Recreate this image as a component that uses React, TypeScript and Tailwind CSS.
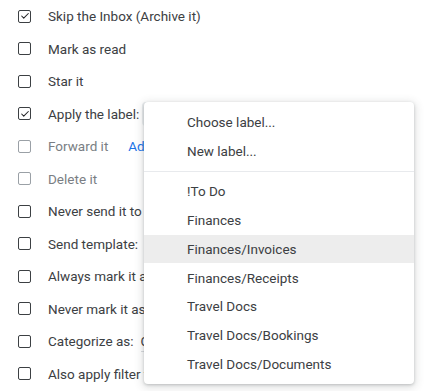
import { Check } from "lucide-react";

type Row = {
  label: string;
  checked?: boolean;
  disabled?: boolean;
  extra?: React.ReactNode;
};

const rows: Row[] = [
  { label: "Skip the Inbox (Archive it)", checked: true },
  { label: "Mark as read" },
  { label: "Star it" },
  {
    label: "Apply the label:",
    checked: true,
    extra: <div className="ml-[3px] h-[24px] w-[120px] shrink-0 rounded-[4px] bg-[#eceff1]" />,
  },
  {
    label: "Forward it",
    disabled: true,
    extra: <span className="ml-[20px] text-[#1a73e8]">Add forwarding address</span>,
  },
  { label: "Delete it", disabled: true },
  { label: "Never send it to Spam" },
  { label: "Send template:", extra: <span className="ml-[7px]">Choose template</span> },
  { label: "Always mark it as important" },
  { label: "Never mark it as important" },
  {
    label: "Categorize as:",
    extra: <span className="ml-[7px] border-b border-[#dadce0]">Choose category...</span>,
  },
  { label: "Also apply filter to matching conversations." },
];

const labels = [
  "!To Do",
  "Finances",
  "Finances/Invoices",
  "Finances/Receipts",
  "Travel Docs",
  "Travel Docs/Bookings",
  "Travel Docs/Documents",
];

function Box({ checked, disabled }: { checked?: boolean; disabled?: boolean }) {
  return (
    <div
      className={
        "flex h-[13px] w-[13px] shrink-0 items-center justify-center rounded-[2px] border-[1.5px] " +
        (disabled ? "border-[#9aa0a6]" : "border-[#3c4043]")
      }
    >
      {checked && <Check size={10} strokeWidth={2.5} className="text-[#202124]" />}
    </div>
  );
}

export default function App() {
  return (
    <div
      className="relative h-[391px] w-[424px] overflow-hidden bg-white text-[13.5px] text-[#3c4043]"
      style={{ fontFamily: "Roboto, 'Liberation Sans', sans-serif" }}
    >
      <div className="flex flex-col">
        {rows.map((r, i) => (
          <div key={i} className="flex h-[32.5px] items-center whitespace-nowrap pl-[18px]">
            <Box checked={r.checked} disabled={r.disabled} />
            <span className={"ml-[17px] " + (r.disabled ? "text-[#7a7e83]" : "")}>{r.label}</span>
            {r.extra}
          </div>
        ))}
      </div>

      {/* open label menu, lies over the rows */}
      <div className="absolute left-[144px] top-[102px] w-[270px] rounded-[4px] bg-white py-[6px] shadow-[0_2px_8px_2px_rgba(60,64,67,0.15),0_1px_3px_0_rgba(60,64,67,0.25)]">
        <div className="flex h-[29px] items-center pl-[43px]">Choose label...</div>
        <div className="flex h-[29px] items-center pl-[43px]">New label...</div>
        <div className="my-[5px] h-px bg-[#e8eaed]" />
        {labels.map((l) => (
          <div
            key={l}
            className={
              "flex h-[28.75px] items-center pl-[43px] " +
              (l === "Finances/Invoices" ? "bg-[#ededed]" : "")
            }
          >
            {l}
          </div>
        ))}
      </div>
    </div>
  );
}
